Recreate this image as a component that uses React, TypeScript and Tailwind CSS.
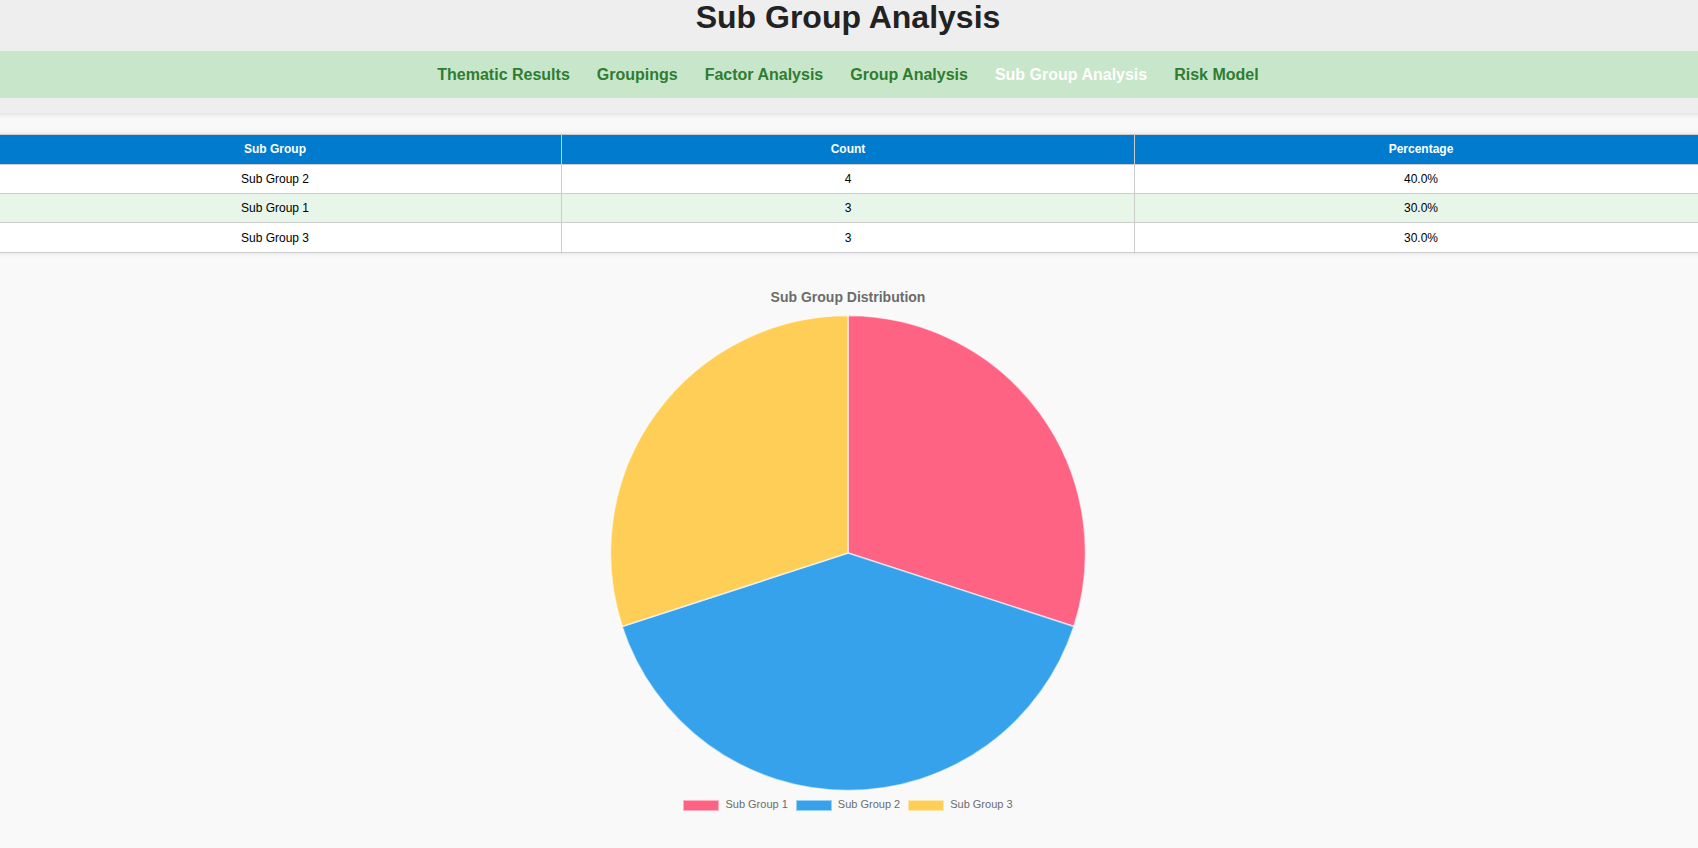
const navItems = [
  'Thematic Results',
  'Groupings',
  'Factor Analysis',
  'Group Analysis',
  'Sub Group Analysis',
  'Risk Model',
];

const rows = [
  { name: 'Sub Group 2', count: 4, percentage: '40.0%' },
  { name: 'Sub Group 1', count: 3, percentage: '30.0%' },
  { name: 'Sub Group 3', count: 3, percentage: '30.0%' },
];

const slices = [
  { name: 'Sub Group 1', value: 3, color: '#ff6384' },
  { name: 'Sub Group 2', value: 4, color: '#36a2eb' },
  { name: 'Sub Group 3', value: 3, color: '#ffce56' },
];

const RADIUS = 237.5;

function PieChart() {
  const total = slices.reduce((sum, s) => sum + s.value, 0);
  const point = (value: number) => {
    const angle = (value / total) * 2 * Math.PI - Math.PI / 2;
    return `${(RADIUS * Math.cos(angle)).toFixed(3)} ${(RADIUS * Math.sin(angle)).toFixed(3)}`;
  };
  let start = 0;
  const arcs = slices.map((s) => {
    const end = start + s.value;
    const d = `M0 0L${point(start)}A${RADIUS} ${RADIUS} 0 0 1 ${point(end)}Z`;
    start = end;
    return { ...s, d };
  });
  return (
    <svg
      viewBox="-238 -238 476 476"
      className="w-[476px] max-w-full"
      role="img"
      aria-label="Sub Group Distribution"
    >
      {arcs.map((a) => (
        <path
          key={a.name}
          d={a.d}
          fill={a.color}
          stroke="#ffffff"
          strokeOpacity="0.6"
          strokeWidth="1.6"
          strokeLinejoin="bevel"
        />
      ))}
    </svg>
  );
}

export default function App() {
  return (
    <div className="min-h-screen overflow-x-hidden bg-[#f9f9f9] font-['Liberation_Sans',Arial,sans-serif] text-black">
      <div className="-mr-[10px] -ml-3">
        <header className="bg-[#eeeeee] pb-[15px] shadow-[0_2px_4px_rgba(0,0,0,0.1)]">
          <h1 className="pb-4 text-center text-[32px] leading-[35px] font-bold text-[#222222]">
            Sub Group Analysis
          </h1>
          <nav className="flex flex-wrap justify-center gap-x-[27px] bg-[#c8e6c9] py-3">
            {navItems.map((item) => (
              <a
                key={item}
                href="#"
                aria-current={item === 'Sub Group Analysis' ? 'page' : undefined}
                className="text-base leading-[23px] font-bold text-[#2e7d32] aria-[current=page]:text-white"
              >
                {item}
              </a>
            ))}
          </nav>
        </header>

        <main>
          <table className="mt-[21px] w-full table-fixed border-collapse bg-white text-center text-xs shadow-[0_0_5px_rgba(0,0,0,0.1)]">
            <thead>
              <tr className="h-[30px] bg-[#007bce] text-white">
                <th className="border border-[#cccccc] pb-[2px] font-bold">Sub Group</th>
                <th className="border border-[#cccccc] pb-[2px] font-bold">Count</th>
                <th className="border border-[#cccccc] pb-[2px] font-bold">Percentage</th>
              </tr>
            </thead>
            <tbody>
              {rows.map((row) => (
                <tr key={row.name} className="h-[29px] last:h-[30px] even:bg-[#e8f5e9]">
                  <td className="border border-[#cccccc]">{row.name}</td>
                  <td className="border border-[#cccccc]">{row.count}</td>
                  <td className="border border-[#cccccc]">{row.percentage}</td>
                </tr>
              ))}
            </tbody>
          </table>

          <section className="flex flex-col items-center pt-[34px] text-[#6c6c6c]">
            <h2 className="pb-2 text-sm leading-5 font-bold">Sub Group Distribution</h2>
            <PieChart />
            <ul className="flex flex-wrap justify-center gap-2 pt-[5px]">
              {slices.map((s) => (
                <li key={s.name} className="flex items-center gap-[6px] text-[11px] leading-4">
                  <svg viewBox="0 0 36 11" className="h-[11px] w-9" aria-hidden="true">
                    <rect width="36" height="11" fill={s.color} />
                    <rect x="0.5" y="0.5" width="35" height="10" fill="none" stroke="#ffffff" strokeOpacity="0.5" />
                  </svg>
                  <span className="pb-[2px]">{s.name}</span>
                </li>
              ))}
            </ul>
          </section>
        </main>
      </div>
    </div>
  );
}
